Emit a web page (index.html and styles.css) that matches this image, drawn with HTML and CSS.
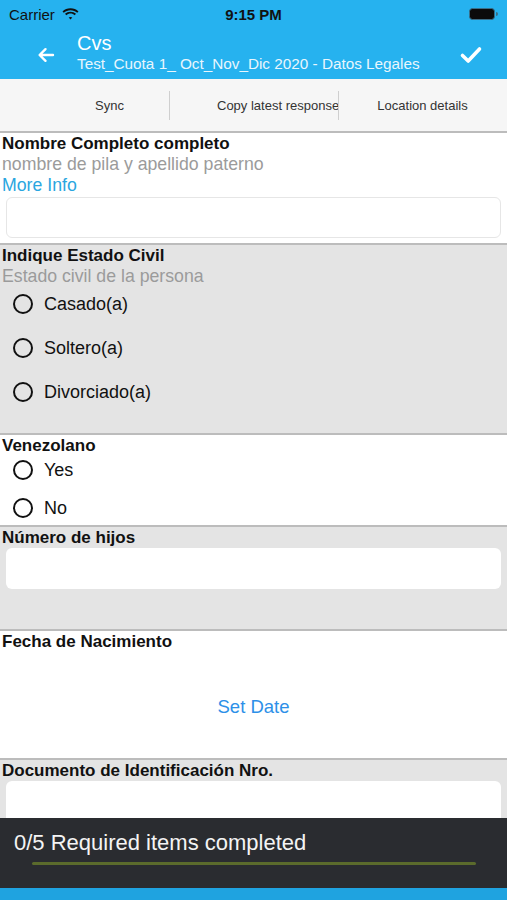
FILE: index.html
```html
<!DOCTYPE html>
<html lang="es">
<head>
<meta charset="utf-8">
<title>Cvs</title>
<link rel="stylesheet" href="styles.css">
</head>
<body>
<header class="appbar">
  <div class="statusbar">
    <div class="carrier">Carrier
      <svg class="wifi" width="17" height="12" viewBox="0 0 17 12"><path d="M8.5 2.2c2.6 0 4.9 1 6.7 2.6l1.3-1.4C14.4 1.4 11.6.3 8.5.3S2.6 1.4.5 3.4l1.3 1.4C3.6 3.2 5.9 2.2 8.5 2.2z" fill="#111"/><path d="M8.5 5.6c1.6 0 3 .6 4.2 1.6L14 5.8c-1.5-1.3-3.4-2.1-5.5-2.1S4.5 4.5 3 5.8l1.3 1.4c1.2-1 2.6-1.6 4.2-1.6z" fill="#111"/><path d="M8.5 8.9c.7 0 1.3.3 1.8.7L8.5 11.6 6.7 9.6c.5-.4 1.1-.7 1.8-.7z" fill="#111"/></svg>
    </div>
    <div class="clock">9:15 PM</div>
    <div class="battery"><span class="battery-body"></span><span class="battery-nub"></span></div>
  </div>
  <nav class="navbar">
    <svg class="back" width="18" height="16" viewBox="0 0 18 16"><path d="M16 8H3M8.5 2.2 2.6 8l5.9 5.8" stroke="#fff" stroke-width="2.4" fill="none" stroke-linecap="round" stroke-linejoin="round"/></svg>
    <div class="titles">
      <div class="title">Cvs</div>
      <div class="subtitle">Test_Cuota 1_ Oct_Nov_Dic 2020 - Datos Legales</div>
    </div>
    <svg class="check" width="24" height="20" viewBox="0 0 24 20"><path d="M3.5 10.5 9.2 16 20.5 4" stroke="#fff" stroke-width="3.6" fill="none" stroke-linecap="round" stroke-linejoin="round"/></svg>
  </nav>
</header>

<div class="toolbar">
  <div class="tool tool-sync">Sync</div>
  <div class="tool tool-copy">Copy latest response</div>
  <div class="tool tool-loc">Location details</div>
</div>

<main class="form">
  <section class="q q-white q-name">
    <div class="q-title">Nombre Completo completo</div>
    <div class="q-hint">nombre de pila y apellido paterno</div>
    <div class="q-link">More Info</div>
    <div class="input input-bordered"></div>
  </section>

  <section class="q q-gray q-civil">
    <div class="q-title">Indique Estado Civil</div>
    <div class="q-hint">Estado civil de la persona</div>
    <div class="radios radios-wide">
      <div class="radio"><span class="dot"></span>Casado(a)</div>
      <div class="radio"><span class="dot"></span>Soltero(a)</div>
      <div class="radio"><span class="dot"></span>Divorciado(a)</div>
    </div>
  </section>

  <section class="q q-white q-ven">
    <div class="q-title">Venezolano</div>
    <div class="radios radios-tight">
      <div class="radio"><span class="dot"></span>Yes</div>
      <div class="radio"><span class="dot"></span>No</div>
    </div>
  </section>

  <section class="q q-gray q-hijos">
    <div class="q-title">Número de hijos</div>
    <div class="input"></div>
  </section>

  <section class="q q-white q-fecha">
    <div class="q-title">Fecha de Nacimiento</div>
    <div class="setdate">Set Date</div>
  </section>

  <section class="q q-gray q-doc">
    <div class="q-title">Documento de Identificación Nro.</div>
    <div class="input input-tall"></div>
  </section>
</main>

<div class="progress">
  <div class="progress-text">0/5 Required items completed</div>
  <div class="progress-track"></div>
</div>
<div class="bottombar"></div>
</body>
</html>
```

FILE: styles.css
```css
html, body {
  margin: 0;
  padding: 0;
  height: 900px;
  overflow: hidden;
  background: #ffffff;
  font-family: "Liberation Sans", Arial, sans-serif;
  color: #111;
}

.appbar {
  background: #26b2ef;
  height: 79px;
  color: #fff;
}

.statusbar {
  height: 28px;
  display: flex;
  align-items: center;
  justify-content: space-between;
  padding: 0 9px;
  position: relative;
}

.carrier {
  display: flex;
  align-items: center;
  gap: 7px;
  font-size: 15px;
  color: #111;
}

.wifi { margin-top: -1px; }

.clock {
  position: absolute;
  left: 0;
  right: 0;
  text-align: center;
  font-size: 15px;
  font-weight: bold;
  color: #111;
  pointer-events: none;
}

.battery {
  display: flex;
  align-items: center;
  margin-right: 0;
}

.battery-body {
  width: 24px;
  height: 10px;
  background: #0b0b0b;
  border: 1px solid #3a6e88;
  border-radius: 3.5px;
}

.battery-nub {
  width: 2px;
  height: 4px;
  background: #3a6e88;
  border-radius: 0 2px 2px 0;
  margin-left: 1px;
}

.navbar {
  height: 51px;
  display: flex;
  align-items: center;
  padding: 0 24px 0 37px;
}

.back { flex: none; margin-top: 2px; }

.titles {
  flex: 1;
  margin-left: 22px;
  margin-top: -3px;
}

.title {
  font-size: 20px;
  line-height: 22px;
}

.subtitle {
  font-size: 15.3px;
  line-height: 19px;
  color: #e8f6fd;
}

.check { flex: none; margin-top: 2px; }

.toolbar {
  height: 52px;
  background: #f6f6f6;
  border-bottom: 2px solid #bcbcbc;
  display: grid;
  grid-template-columns: 169px 169px 169px;
  align-items: center;
  font-size: 13px;
  color: #333;
  position: relative;
}

.tool {
  line-height: 29px;
  white-space: nowrap;
  position: relative;
}

.tool-sync {
  padding-left: 50px;
  text-align: center;
}

.tool-copy {
  padding-left: 47px;
  border-left: 1.5px solid #cfcfcf;
}

.tool-loc {
  text-align: center;
}

.tool-loc::before {
  content: "";
  position: absolute;
  left: 0;
  top: 0;
  bottom: 0;
  border-left: 1.5px solid #cfcfcf;
}

.q {
  padding: 1px 0 0 0;
  border-top: 2px solid #bcbcbc;
}

.form .q:first-child { border-top: none; }

.q-white { background: #ffffff; }
.q-gray { background: #e4e4e4; }

.q-title {
  font-size: 17px;
  font-weight: bold;
  line-height: 20px;
  padding-left: 2px;
  color: #111;
}

.q-hint {
  font-size: 17.7px;
  line-height: 21px;
  padding-left: 2px;
  color: #9b9b9b;
}

.q-link {
  font-size: 17.7px;
  line-height: 21px;
  padding-left: 2px;
  color: #2aa6e0;
}

.input {
  height: 41px;
  margin: 0 6px;
  background: #ffffff;
  border-radius: 6px;
  box-sizing: border-box;
}

.input-bordered {
  border: 1px solid #e6e6e6;
  margin-top: 1px;
}

.q-name { padding-bottom: 5px; }

.radios {
  display: flex;
  flex-direction: column;
}

.radios-wide { gap: 16px; margin-top: 3px; }
.radios-tight { gap: 10px; }

.q-civil { padding-bottom: 27px; }
.q-ven { padding-bottom: 3px; }

.radio {
  height: 28px;
  display: flex;
  align-items: center;
  font-size: 18px;
  color: #111;
}

.dot {
  width: 20px;
  height: 20px;
  box-sizing: border-box;
  border: 2.2px solid #111;
  border-radius: 50%;
  margin: 0 11px 0 13px;
  flex: none;
}

.q-hijos { padding-bottom: 40px; }

.q-fecha { padding-bottom: 40px; }

.setdate {
  margin-top: 44px;
  text-align: center;
  font-size: 18.5px;
  line-height: 22px;
  color: #2d90e8;
}

.input-tall { height: 80px; }

.progress {
  position: fixed;
  left: 0;
  right: 0;
  bottom: 12px;
  height: 70px;
  background: #2a2c30;
  box-sizing: border-box;
  padding: 12px 0 0 14px;
}

.progress-text {
  font-size: 22px;
  line-height: 26px;
  color: #f4f4f4;
}

.progress-track {
  margin: 6px 0 0 18px;
  width: 444px;
  height: 3px;
  background: #5b6b2c;
  border-radius: 2px;
}

.bottombar {
  position: fixed;
  left: 0;
  right: 0;
  bottom: 0;
  height: 12px;
  background: #1fa3e0;
}
```
